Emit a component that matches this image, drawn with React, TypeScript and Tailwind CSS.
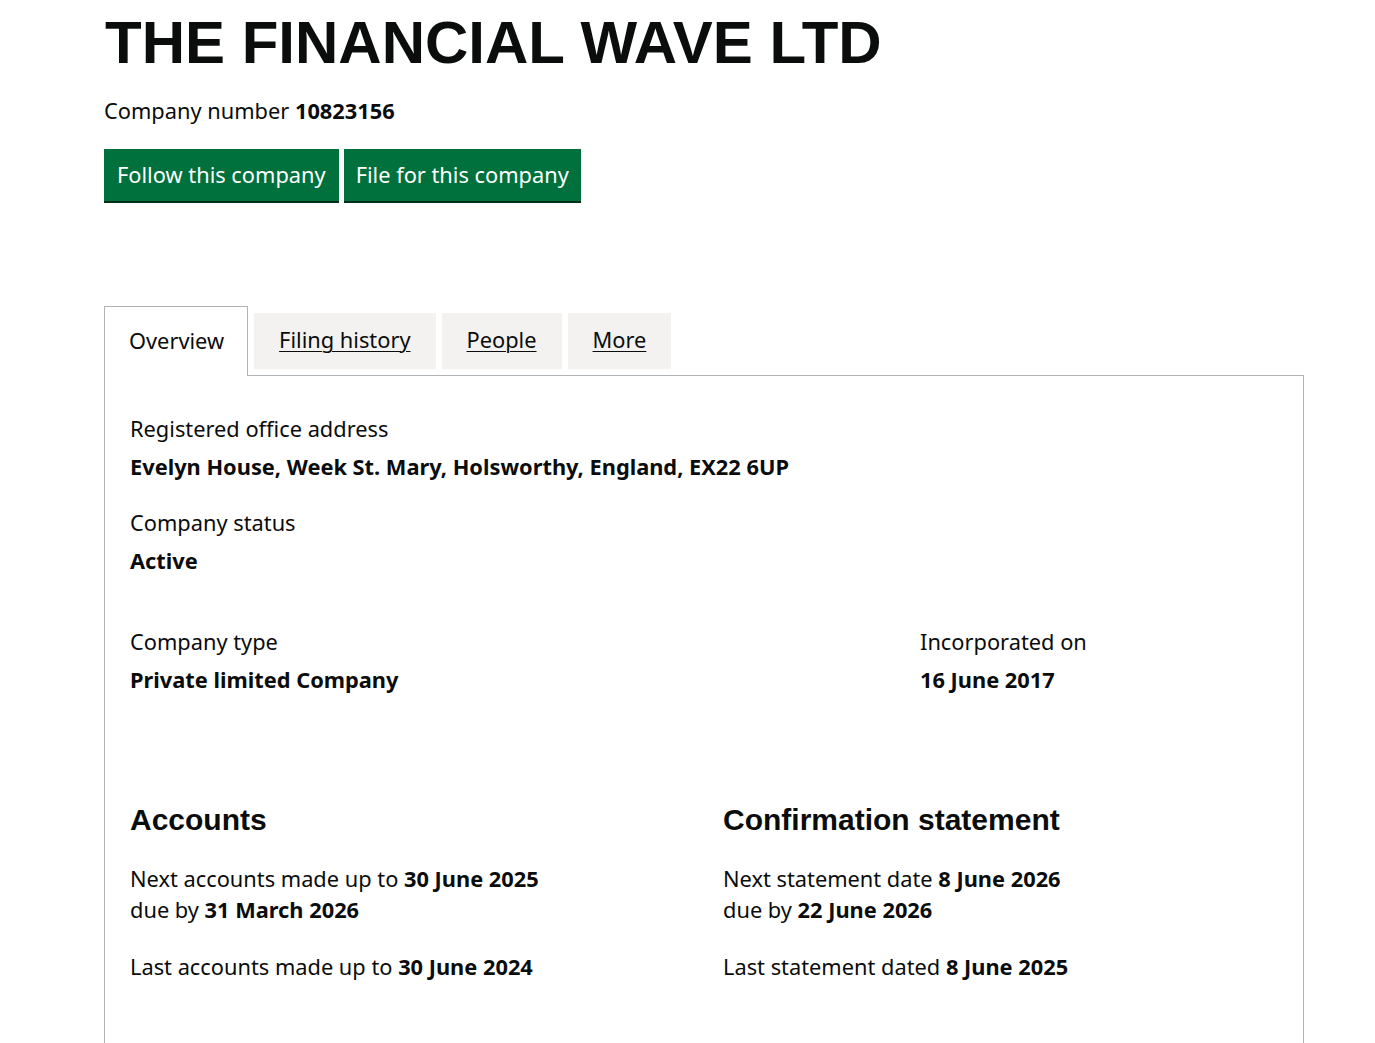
const body = "font-['Noto_Sans',Arial,sans-serif]"
const heading = "font-['Liberation_Sans',Arial,sans-serif]"

function Field({ label, value, className = '' }: { label: string; value: string; className?: string }) {
  return (
    <div className={className}>
      <dt className="text-[21.8px] leading-[25px]">{label}</dt>
      <dd className="mt-[13px] text-[21.8px] font-bold leading-[25px]">{value}</dd>
    </div>
  )
}

function Tab({ label, active = false }: { label: string; active?: boolean }) {
  if (active) {
    return (
      <li className="relative z-10 h-[70px] border border-b-0 border-[#b1b4b6] bg-white pl-[24px] pr-[23px] pt-[21px] text-[21.8px] leading-[25px]">
        {label}
      </li>
    )
  }
  return (
    <li className="mt-[7px] h-[56px] bg-[#f3f2f1] px-[25px] pt-[14px] text-[21.8px] leading-[25px]">
      <a href="#" className="underline decoration-1 underline-offset-[3px]">
        {label}
      </a>
    </li>
  )
}

export default function App() {
  return (
    <div className={`min-h-screen bg-white text-[#0b0c0c] ${body}`}>
      <div className="pl-[104px] pr-[71px] pt-[13px]">
        <h1 className={`${heading} pl-[1px] text-[60px] font-bold leading-[60px]`}>THE FINANCIAL WAVE LTD</h1>

        <p className="mt-[25px] text-[21.8px] leading-[25px]">
          Company number <strong className="font-bold">10823156</strong>
        </p>

        <div className="mt-[26px] flex gap-[5px]">
          <button className="h-[52px] bg-[#00703c] px-[13px] pb-[2px] text-[21.8px] leading-[25px] text-white shadow-[0_2px_0_#002d18]">
            Follow this company
          </button>
          <button className="h-[52px] bg-[#00703c] px-[12px] pb-[2px] text-[21.8px] leading-[25px] text-white shadow-[0_2px_0_#002d18]">
            File for this company
          </button>
        </div>

        <ul className="mt-[105px] flex items-start gap-[6px]">
          <Tab label="Overview" active />
          <Tab label="Filing history" />
          <Tab label="People" />
          <Tab label="More" />
        </ul>

        <div className="-mt-px min-h-[700px] border border-[#b1b4b6] px-[25px] pt-[40px]">
          <dl>
            <Field label="Registered office address" value="Evelyn House, Week St. Mary, Holsworthy, England, EX22 6UP" />
            <Field label="Company status" value="Active" className="mt-[31px]" />
            <div className="mt-[56px] grid grid-cols-[790px_1fr]">
              <Field label="Company type" value="Private limited Company" />
              <Field label="Incorporated on" value="16 June 2017" />
            </div>
          </dl>

          <div className="mt-[110px] grid grid-cols-[593px_1fr]">
            <section>
              <h2 className={`${heading} text-[30px] font-bold leading-[35px]`}>Accounts</h2>
              <p className="mt-[26px] text-[21.8px] leading-[31px]">
                Next accounts made up to <strong className="font-bold">30 June 2025</strong>
                <br />
                due by <strong className="font-bold">31 March 2026</strong>
              </p>
              <p className="mt-[26px] text-[21.8px] leading-[31px]">
                Last accounts made up to <strong className="font-bold">30 June 2024</strong>
              </p>
            </section>
            <section>
              <h2 className={`${heading} text-[30px] font-bold leading-[35px]`}>Confirmation statement</h2>
              <p className="mt-[26px] text-[21.8px] leading-[31px]">
                Next statement date <strong className="font-bold">8 June 2026</strong>
                <br />
                due by <strong className="font-bold">22 June 2026</strong>
              </p>
              <p className="mt-[26px] text-[21.8px] leading-[31px]">
                Last statement dated <strong className="font-bold">8 June 2025</strong>
              </p>
            </section>
          </div>
        </div>
      </div>
    </div>
  )
}
